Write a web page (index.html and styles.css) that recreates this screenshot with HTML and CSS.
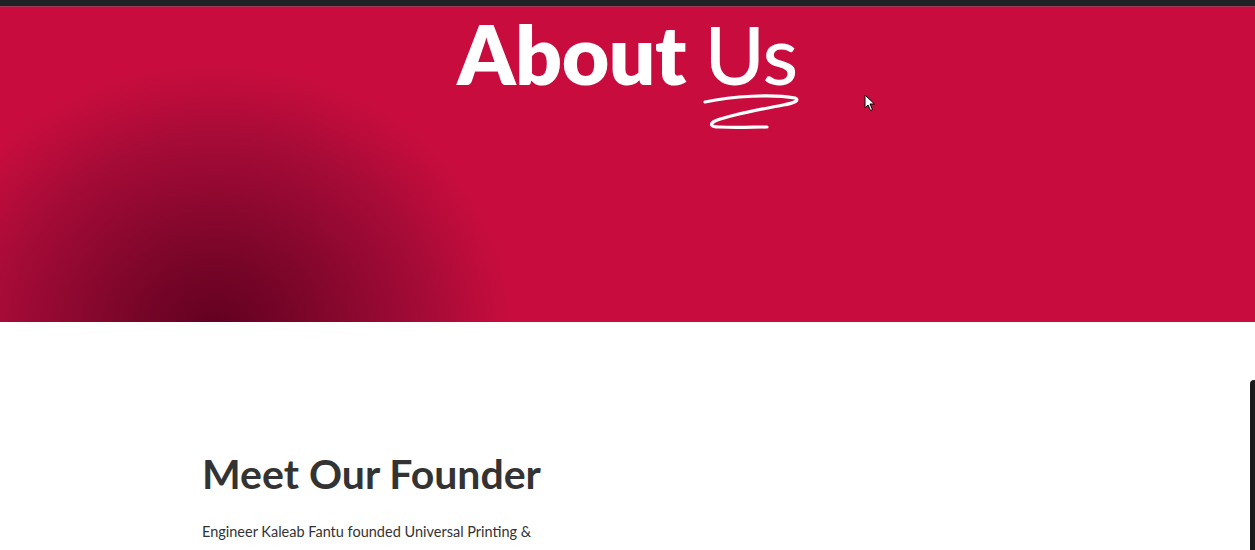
FILE: index.html
```html
<!DOCTYPE html>
<html lang="en">
<head>
<meta charset="utf-8">
<title>About Us</title>
<link rel="stylesheet" href="styles.css">
</head>
<body>
<div class="topbar"></div>
<header class="hero">
  <h1 class="hero-title">About <span class="us">Us<svg class="squiggle" viewBox="0 0 96 36" width="96" height="36" aria-hidden="true"><path d="M2 8 C 30 2, 70 0, 92 4 C 97 6, 92 9, 80 11 C 60 15, 30 20, 12 27 C 6 30, 8 33, 16 33 C 35 34, 50 33, 64 33" fill="none" stroke="#fff" stroke-width="3.2" stroke-linecap="round" stroke-linejoin="round"/></svg></span></h1>
  <svg class="cursor" viewBox="0 0 12 18" width="12" height="18" aria-hidden="true"><path d="M1 1 L1 14 L4 11 L6.5 16.5 L8.5 15.5 L6 10 L10.5 10 Z" fill="#fff" stroke="#000" stroke-width="1"/></svg>
</header>
<main class="founder">
  <div class="founder-inner">
    <h2 class="founder-title">Meet Our Founder</h2>
    <p class="founder-text">Engineer Kaleab Fantu founded Universal Printing &amp;</p>
  </div>
  <div class="side-widget"></div>
</main>
</body>
</html>
```
FILE: styles.css
```css
html, body {
  margin: 0;
  padding: 0;
  background: #ffffff;
  font-family: "Lato", "Noto Sans", sans-serif;
  overflow: hidden;
}
.topbar {
  height: 6px;
  background: #1f2125;
  border-bottom: 1px solid #9c3a52;
}
.hero {
  position: relative;
  height: 315px;
  background:
    radial-gradient(ellipse 300px 270px at 215px 325px, #620020 0%, #760528 25%, #8f0830 50%, #a60b37 72%, #bb0c3b 88%, #c80d3e 100%),
    #c80d3e;
}
.hero-title {
  position: relative;
  margin: 0;
  padding-top: 1px;
  text-align: center;
  color: #ffffff;
  font-size: 82px;
  font-weight: 800;
  line-height: 90px;
  letter-spacing: -0.5px;
}
.us {
  position: relative;
  font-weight: 500;
}
.squiggle {
  position: absolute;
  left: -2px;
  top: 90px;
}
.cursor {
  position: absolute;
  left: 864px;
  top: 87px;
}
.founder {
  position: relative;
  height: 228px;
  overflow: hidden;
}
.founder-inner {
  padding: 127px 0 0 202px;
}
.founder-title {
  margin: 0;
  color: #333333;
  font-size: 41px;
  font-weight: 700;
  line-height: 50px;
}
.founder-text {
  margin: 22px 0 0;
  color: #333333;
  font-size: 14.5px;
  line-height: 22px;
}
.side-widget {
  position: absolute;
  right: -10px;
  top: 58px;
  width: 15px;
  height: 170px;
  background: #1a1a1a;
  border-radius: 4px 4px 0 0;
}
```
